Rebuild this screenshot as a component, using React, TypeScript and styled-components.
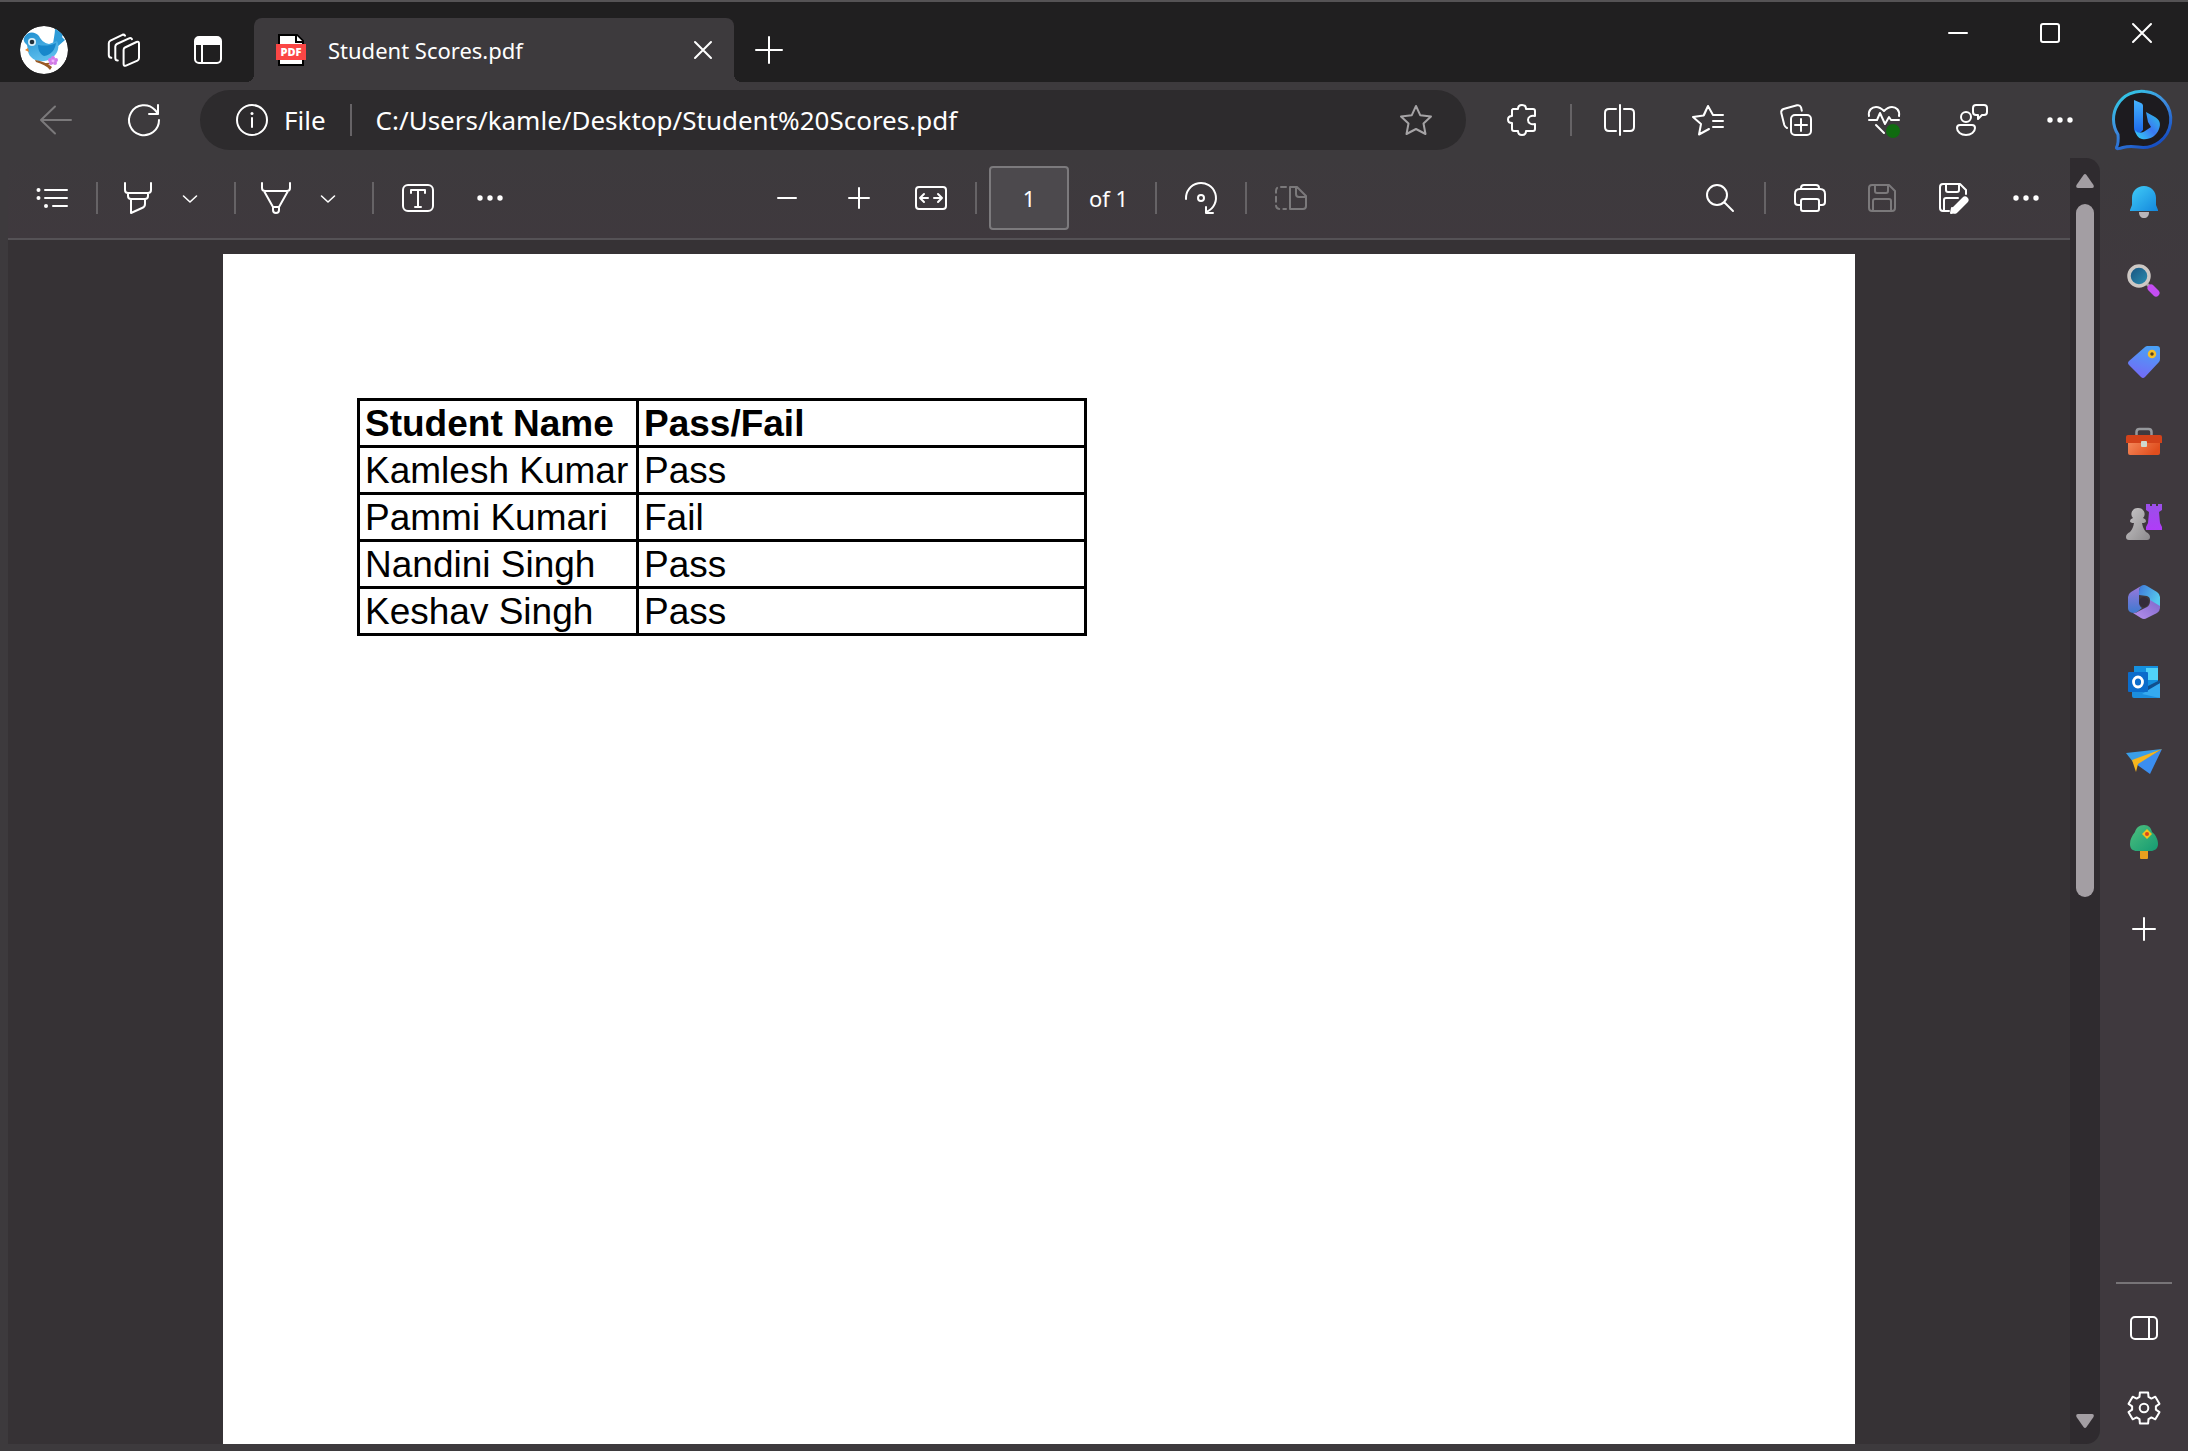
import React from "react";
import styled, { createGlobalStyle, css } from "styled-components";

const color = {
  titleBar: "#201f20",
  chrome: "#3d3a3d",
  toolbar: "#3f393e",
  field: "#2d2b2d",
  canvas: "#363235",
  track: "#2f2b2f",
  thumb: "#a39ea3",
  rule: "#555256",
  divider: "#666366",
  text: "#ffffff",
  muted: "#7b797b",
};

const uiFont = `"Segoe UI", "Noto Sans", "Open Sans", sans-serif`;

const GlobalStyle = createGlobalStyle`
  *, *::before, *::after { box-sizing: border-box; }
  html, body { margin: 0; background: ${color.chrome}; }
  body { font-family: ${uiFont}; color: ${color.text}; overflow: hidden; }
  button, input { font: inherit; color: inherit; margin: 0; padding: 0; border: 0; background: none; }
  button { cursor: pointer; }
  svg { display: block; flex: none; overflow: visible; }
`;

/* ---------- window frame ---------- */

const Window = styled.div`
  display: flex;
  flex-direction: column;
  height: 100vh;
  background: ${color.chrome};
`;

const TitleBar = styled.header`
  display: flex;
  align-items: flex-end;
  height: 82px;
  padding-left: 3px;
  border-top: 2px solid #555355;
  background: ${color.titleBar};
`;

const IconButton = styled.button<{ $w?: number; $h?: number; $dim?: boolean }>`
  display: flex;
  align-items: center;
  justify-content: center;
  flex: none;
  width: ${(p) => p.$w ?? 72}px;
  height: ${(p) => p.$h ?? 64}px;
  color: ${(p) => (p.$dim ? color.muted : color.text)};
`;

const flare = css`
  content: "";
  position: absolute;
  bottom: 0;
  width: 8px;
  height: 8px;
`;

const Tab = styled.div`
  position: relative;
  display: flex;
  align-items: center;
  gap: 22px;
  width: 480px;
  height: 64px;
  margin-left: 1px;
  padding: 0 13px 0 22px;
  border-radius: 8px 8px 0 0;
  background: ${color.chrome};
  &::before {
    ${flare}
    left: -8px;
    background: radial-gradient(circle at 0 0, transparent 8px, ${color.chrome} 8px);
  }
  &::after {
    ${flare}
    right: -8px;
    background: radial-gradient(circle at 100% 0, transparent 8px, ${color.chrome} 8px);
  }
`;

const TabTitle = styled.span`
  flex: 1;
  font-size: 22px;
  line-height: 32px;
  white-space: nowrap;
`;

const WindowControls = styled.div`
  display: flex;
  align-self: flex-start;
  margin-left: auto;
`;

/* ---------- address row ---------- */

const AddressRow = styled.div`
  display: flex;
  align-items: center;
  height: 76px;
  padding: 0 4px 0 12px;
  background: ${color.chrome};
`;

const AddressBar = styled.form`
  display: flex;
  align-items: center;
  flex: 1;
  height: 60px;
  margin: 0 12px;
  padding: 0 6px 0 36px;
  border-radius: 30px;
  background: ${color.field};
`;

const SiteInfo = styled.button`
  display: flex;
  align-items: center;
  gap: 16px;
  height: 48px;
  font-size: 26px;
  line-height: 36px;
`;

const UrlInput = styled.input`
  flex: 1;
  min-width: 0;
  height: 48px;
  font-size: 26px;
  line-height: 36px;
  outline: none;
`;

const Divider = styled.span<{ $gap?: number }>`
  flex: none;
  width: 2px;
  height: 32px;
  margin: 0 ${(p) => p.$gap ?? 8}px;
  background: ${color.divider};
`;

/* ---------- viewer ---------- */

const Body = styled.div`
  display: flex;
  flex: 1;
  min-height: 0;
`;

const Viewer = styled.main`
  display: flex;
  flex-direction: column;
  flex: 1;
  min-width: 0;
  padding: 0 0 7px 8px;
`;

const Toolbar = styled.div`
  display: grid;
  grid-template-columns: 1fr auto 1fr;
  align-items: center;
  height: 82px;
  padding: 0 8px;
  border-bottom: 2px solid ${color.rule};
  background: linear-gradient(${color.chrome}, ${color.toolbar});
`;

const Group = styled.div<{ $end?: boolean }>`
  display: flex;
  align-items: center;
  justify-content: ${(p) => (p.$end ? "flex-end" : "flex-start")};
`;

const SplitButton = styled.div`
  display: flex;
  padding-right: 16px;
`;

const PageInput = styled.input`
  width: 80px;
  height: 64px;
  margin-left: 4px;
  border: 2px solid #7c7a7d;
  border-radius: 4px;
  background: #4c494d;
  font-size: 22px;
  text-align: center;
`;

const PageCount = styled.label`
  min-width: 58px;
  margin-left: 20px;
  font-size: 22px;
  line-height: 32px;
  white-space: nowrap;
`;

const Canvas = styled.section`
  display: flex;
  flex: 1;
  min-height: 0;
  padding: 14px 215px 0;
  background: ${color.canvas};
`;

const Sheet = styled.article`
  flex: 1;
  padding: 144px 134px 0;
  background: #ffffff;
  color: #000000;
  overflow: hidden;
`;

const ScoreTable = styled.table`
  width: 730px;
  table-layout: fixed;
  border-collapse: collapse;
  font-family: Arial, "Liberation Sans", sans-serif;
  font-size: 37px;
  line-height: 42px;
`;

const cell = css`
  height: 47px;
  padding: 2px 5px 0;
  border: 3px solid #000000;
  text-align: left;
  white-space: nowrap;
`;
const HeadCell = styled.th<{ $w?: number }>`
  ${cell}
  width: ${(p) => (p.$w ? `${p.$w}px` : "auto")};
  font-weight: 700;
`;
const Cell = styled.td`
  ${cell}
`;

/* ---------- scrollbar ---------- */

const Scrollbar = styled.div`
  display: flex;
  flex-direction: column;
  align-items: center;
  width: 30px;
  margin-bottom: 7px;
  padding: 16px 0;
  gap: 16px;
  border-radius: 0 14px 14px 0;
  background: ${color.track};
`;
const ScrollTrack = styled.div`
  flex: 1;
  width: 18px;
`;
const ScrollThumb = styled.div`
  height: 58%;
  border-radius: 9px;
  background: ${color.thumb};
`;

/* ---------- sidebar ---------- */

const Sidebar = styled.aside`
  display: flex;
  flex-direction: column;
  align-items: center;
  width: 88px;
  padding: 4px 0 3px;
  background: linear-gradient(${color.chrome}, ${color.toolbar} 120px);
`;
const AddSlot = styled.div`
  margin-top: 7px;
`;
const SidebarRule = styled.hr`
  width: 56px;
  height: 2px;
  margin: auto 0 4px;
  border: 0;
  background: #777477;
`;

/* ---------- line icons ---------- */

type IconProps = { w?: number; h?: number; sw?: number; children: React.ReactNode };
const Line = ({ w = 32, h = 32, sw = 2, children }: IconProps) => (
  <svg
    width={w}
    height={h}
    viewBox={`0 0 ${w} ${h}`}
    fill="none"
    stroke="currentColor"
    strokeWidth={sw}
    strokeLinecap="round"
    strokeLinejoin="round"
    aria-hidden="true"
  >
    {children}
  </svg>
);

const Dots = () => (
  <Line w={28} h={6}>
    <g fill="currentColor" stroke="none">
      <circle cx="4" cy="3" r="2.7" />
      <circle cx="14" cy="3" r="2.7" />
      <circle cx="24" cy="3" r="2.7" />
    </g>
  </Line>
);
const Chevron = () => (
  <Line w={16} h={10}>
    <path d="M1.5 3 8 9l6.5-6" strokeWidth="1.6" />
  </Line>
);
const Workspaces = () => (
  <Line w={34} h={34}>
    <path d="M18 14.5 29.5 9q2.5-1 2.5 1.6V25q0 1.8-1.6 2.6L19 32.6q-2.4.8-2.4-1.6V17q0-1.8 1.4-2.5z" />
    <path d="M25 6.2q-.8-1.6-2.4-1L9.800 11Q8.300 11.800 8.300 13.500V25q0 2.500 2.500 2.500" />
    <path d="M18 2.600q-1-1.400-2.600-.8L3.400 7.600Q1.800 8.400 1.800 10.200V22q0 2.500 2.500 2.800" />
  </Line>
);
const TabMenu = () => (
  <Line w={28} h={28}>
    <rect x="1" y="1" width="26" height="26" rx="4" />
    <path d="M1 9V5a4 4 0 0 1 4-4h18a4 4 0 0 1 4 4v4z" fill="currentColor" stroke="none" />
    <path d="M1 8h26M8 8v19" />
  </Line>
);
const Gear = () => {
  const points: string[] = [];
  for (let k = 0; k < 6; k++) {
    const spots: [number, number][] = [
      [-22, 12],
      [-15, 16],
      [15, 16],
      [22, 12],
    ];
    spots.forEach(([offset, r]) => {
      const a = ((k * 60 - 90 + offset) * Math.PI) / 180;
      points.push(`${(17 + r * Math.cos(a)).toFixed(2)},${(17 + r * Math.sin(a)).toFixed(2)}`);
    });
  }
  return (
    <Line w={34} h={34}>
      <polygon points={points.join(" ")} />
      <circle cx="17" cy="17" r="4.3" />
    </Line>
  );
};

/* ---------- colour drawings ---------- */

const Bird = () => (
  <svg width="48" height="48" viewBox="0 0 48 48" aria-hidden="true">
    <defs>
      <linearGradient id="birdBody" x1="0" y1="0" x2="0.4" y2="1">
        <stop offset="0" stopColor="#1f8fd0" />
        <stop offset="1" stopColor="#5cbdec" />
      </linearGradient>
      <clipPath id="birdClip">
        <circle cx="24" cy="24" r="24" />
      </clipPath>
    </defs>
    <g clipPath="url(#birdClip)">
      <circle cx="24" cy="24" r="24" fill="#fff" />
      <path d="M33 18c1-7 2-11 2-16l4 3 5 1-2 5 3 3-8 7z" fill="#2c9bd8" />
      <path d="M4 12C7 5 15 5 19 10c2 4 5 7 10 8l8-3c3 5 1 13-5 17-7 5-17 4-21-1-4-4-3-9-4-12C5 17 3 15 4 12z" fill="url(#birdBody)" />
      <path d="M18 19c6 1 12 1 18-2-1 7-5 12-12 13-4-2-6-6-6-11z" fill="#1787cb" />
      <circle cx="12" cy="16" r="4" fill="#d9eef8" />
      <circle cx="12" cy="16" r="2.300" fill="#22303a" />
      <path d="m8 22-3 2 4 2z" fill="#e8832c" />
      <path d="M15 34c7 1 12 3 17 7l-2 3c-3-4-8-6-14-8z" fill="#9a5a26" />
      <path d="m25 38 8-1" stroke="#9a5a26" strokeWidth="1.500" />
      <g fill="#d37bea">
        <circle cx="33" cy="32" r="2" />
        <circle cx="36" cy="34" r="2" />
        <circle cx="35" cy="37" r="2" />
        <circle cx="31" cy="37" r="2" />
        <circle cx="30" cy="34" r="2" />
      </g>
      <circle cx="33" cy="35" r="1.300" fill="#f4b6ff" />
    </g>
  </svg>
);

const PdfFile = () => (
  <svg width="30" height="32" viewBox="0 0 30 32" aria-hidden="true">
    <path d="M3 1h18l6 6v24H3z" fill="#fff" stroke="#000" strokeWidth="2" />
    <path d="M20 1v7h7" fill="#fff" stroke="#000" strokeWidth="2" />
    <rect y="10" width="30" height="16" fill="#fb4645" />
    <text x="15" y="22" textAnchor="middle" fontFamily="Open Sans, sans-serif" fontWeight="800" fontSize="11" fill="#fff">
      PDF
    </text>
  </svg>
);

const Bing = () => (
  <svg width="60" height="60" viewBox="0 0 60 60" aria-hidden="true">
    <defs>
      <linearGradient id="bingRing" x1="0" y1="0" x2="0.6" y2="1">
        <stop offset="0" stopColor="#2fd6e6" />
        <stop offset="0.5" stopColor="#3f8fe0" />
        <stop offset="1" stopColor="#1750c4" />
      </linearGradient>
      <linearGradient id="bingStem" x1="0" y1="0" x2="0" y2="1">
        <stop offset="0" stopColor="#45b5ff" />
        <stop offset="1" stopColor="#1a63ea" />
      </linearGradient>
      <linearGradient id="bingBowl" x1="0" y1="1" x2="1" y2="0">
        <stop offset="0" stopColor="#35d7f5" />
        <stop offset="0.5" stopColor="#3a78f2" />
        <stop offset="1" stopColor="#2dc7e6" />
      </linearGradient>
    </defs>
    <path
      d="M31 1.500a28 28 0 1 1-7 55.500c-6-1-10-1-15 .5-3 1-7 2-6.500 0 1.500-3 2-8 1.500-13A28 28 0 0 1 31 1.500z"
      fill="#1d1b1f"
      stroke="url(#bingRing)"
      strokeWidth="3"
      strokeLinejoin="round"
    />
    <path d="M20 10l7 3c2 1 2 2 2 4v23l-5 5c-3-2-4-4-4-8z" fill="url(#bingStem)" />
    <path d="M32 22l9 5c5 3 6 7 4 12-3 8-10 11-17 10-4-1-6-4-7-9 3 4 7 3 10 1l6-4-3-5z" fill="url(#bingBowl)" />
  </svg>
);

const Bell = () => (
  <svg width="28" height="32" viewBox="0 0 28 32" aria-hidden="true">
    <defs>
      <linearGradient id="bell" x1="0" y1="0" x2="1" y2="1">
        <stop offset="0" stopColor="#41cdf8" />
        <stop offset="1" stopColor="#1487dc" />
      </linearGradient>
    </defs>
    <path d="M9 26h10c0 4-2 6-5 6s-5-2-5-6z" fill="#b9b6ba" />
    <path d="M14 0c7 0 12 5 12 12v7l2 5v1H0v-1l2-5v-7C2 5 7 0 14 0z" fill="url(#bell)" />
  </svg>
);

const Magnifier = () => (
  <svg width="34" height="34" viewBox="0 0 34 34" aria-hidden="true">
    <defs>
      <linearGradient id="lens" x1="0" y1="0" x2="1" y2="1">
        <stop offset="0" stopColor="#174f7c" />
        <stop offset="1" stopColor="#2d93b4" />
      </linearGradient>
    </defs>
    <path d="m20 19 4 4" stroke="#a9a4a6" strokeWidth="3" />
    <path d="m24 23 5 5" stroke="#c44df2" strokeWidth="7" strokeLinecap="round" />
    <circle cx="12" cy="11" r="10" fill="url(#lens)" stroke="#cdc8c4" strokeWidth="3.500" />
  </svg>
);

const Tag = () => (
  <svg width="32" height="32" viewBox="0 0 32 32" aria-hidden="true">
    <defs>
      <linearGradient id="tag" x1="0.600" y1="0" x2="0.300" y2="1">
        <stop offset="0" stopColor="#4aa0f6" />
        <stop offset="1" stopColor="#7568f6" />
      </linearGradient>
    </defs>
    <path d="M17 1q1-1 2.500-1H29q3 0 3 3v10q0 2-1 3L17 31q-2 2-4 0L1 19q-2-2 0-4z" fill="url(#tag)" />
    <circle cx="24" cy="8" r="3" fill="#59431c" stroke="#f4bf28" strokeWidth="2.500" />
  </svg>
);

const Toolbox = () => (
  <svg width="36" height="28" viewBox="0 0 36 28" aria-hidden="true">
    <defs>
      <linearGradient id="boxBase" x1="0" y1="0" x2="1" y2="0.400">
        <stop offset="0" stopColor="#f58a5c" />
        <stop offset="1" stopColor="#e04e1e" />
      </linearGradient>
    </defs>
    <path d="M10.500 8V4q0-3 3-3h9q3 0 3 3v4" fill="none" stroke="#96989c" strokeWidth="2.500" />
    <path d="M2 13h32v12q0 2-2 2H4q-2 0-2-2z" fill="url(#boxBase)" />
    <path d="M2 7h32q2 0 2 2v6H0V9q0-2 2-2z" fill="#d3421a" />
    <rect x="15" y="13" width="6" height="6" rx="1" fill="#cfd8cf" />
  </svg>
);

const Chess = () => (
  <svg width="36" height="36" viewBox="0 0 36 36" aria-hidden="true">
    <defs>
      <linearGradient id="rook" x1="0" y1="0" x2="0" y2="1">
        <stop offset="0" stopColor="#9a50e8" />
        <stop offset="1" stopColor="#b03cf8" />
      </linearGradient>
      <linearGradient id="pawn" x1="0" y1="0" x2="1" y2="1">
        <stop offset="0" stopColor="#c9c7c9" />
        <stop offset="1" stopColor="#8d8b8d" />
      </linearGradient>
    </defs>
    <path d="M20 0h4v2h2V0h4v2h2V0h4v6l-3 2 1 11 2 4v3H20v-3l2-4 1-11-3-2z" fill="url(#rook)" />
    <path d="M12 4a6 6 0 0 1 5 10q3 1 3 3t-4 2q1 6 4 9 4 2 4 5 0 3-3 3H3q-3 0-3-3t4-5q3-3 4-9-4 0-4-2t3-3a6 6 0 0 1 5-10z" fill="url(#pawn)" />
  </svg>
);

const Office = () => (
  <svg width="32" height="34" viewBox="0 0 32 34" aria-hidden="true">
    <defs>
      <linearGradient id="m365a" x1="0" y1="0" x2="0" y2="1">
        <stop offset="0" stopColor="#9a78dc" />
        <stop offset="1" stopColor="#3f79cf" />
      </linearGradient>
      <linearGradient id="m365b" x1="0" y1="0" x2="1" y2="0.500">
        <stop offset="0" stopColor="#3f78d8" />
        <stop offset="1" stopColor="#56c8ee" />
      </linearGradient>
      <linearGradient id="m365c" x1="0" y1="1" x2="1" y2="0">
        <stop offset="0" stopColor="#b892ee" />
        <stop offset="1" stopColor="#7a63c8" />
      </linearGradient>
    </defs>
    <path d="M13 1 3 7Q0 9 0 12v11q0 3 3 4.500 3 1 6-.5l5-4q-3-2-3-6V6q0-3 2-5z" fill="url(#m365a)" />
    <path d="M32 15v8q0 3-3 5l-10 5q-3 2-6 0l-8-5q4 0 6-2l8-4q3-2 3-6V12z" fill="url(#m365c)" />
    <path d="M13 1q3-2 6 0l10 6q3 2 3 5v9L22 15q0-3-3-4l-8-1V6q0-3 2-5z" fill="url(#m365b)" />
    <path d="M13 13q3-2 6 0 2 1.500 2 4t-3 4.500q-2 1.500-5-.5-2-1.500-2-4t2-4z" fill="#342c39" />
  </svg>
);

const Outlook = () => (
  <svg width="36" height="32" viewBox="0 0 36 32" aria-hidden="true">
    <rect x="8" y="0" width="24" height="20" fill="#1490df" />
    <rect x="20" y="2" width="12" height="12" fill="#50d2f8" />
    <path d="M34 17v13q0 2-2 2H8q-2 0-2-2v-4l16-3z" fill="#1b8ede" />
    <path d="M34 17 16 28l18 4z" fill="#35aaf0" />
    <path d="m22 24 12-7v-3l-12 6z" fill="#114f8d" />
    <rect x="2" y="6" width="20" height="20" rx="1" fill="#0b6ccb" />
    <ellipse cx="12" cy="16" rx="4.500" ry="5" fill="none" stroke="#fff" strokeWidth="2.800" />
  </svg>
);

const Plane = () => (
  <svg width="36" height="26" viewBox="0 0 36 26" aria-hidden="true">
    <path d="M0 4 36 0 7 13z" fill="#3a9ee8" />
    <path d="M36 0 24 25 10 15z" fill="#3b8ef0" />
    <path d="M6 11 36 0 12 15l-2 8z" fill="#f5b51d" />
  </svg>
);

const Tree = () => (
  <svg width="28" height="34" viewBox="0 0 28 34" aria-hidden="true">
    <defs>
      <linearGradient id="leaf" x1="0" y1="0" x2="1" y2="1">
        <stop offset="0" stopColor="#4fc07e" />
        <stop offset="1" stopColor="#149a72" />
      </linearGradient>
    </defs>
    <rect x="10" y="24" width="8" height="10" rx="1" fill="#e9a01f" />
    <path d="M14 0c5 0 7 3 8 7 4 3 6 8 6 12 0 5-4 7-7 7H7c-4 0-7-2-7-7 0-5 2-8 5-12 1-4 4-7 9-7z" fill="url(#leaf)" />
    <path d="m17 4 5 5-5 5-5-5z" fill="#f3c21c" />
    <circle cx="17" cy="9" r="2" fill="#d8471c" />
  </svg>
);

const Plus = ({ size = 24, sw = 2 }: { size?: number; sw?: number }) => (
  <Line w={size} h={size} sw={sw}>
    <path d={`M${size / 2} 1v${size - 2}M1 ${size / 2}h${size - 2}`} />
  </Line>
);

const scores = [
  ["Kamlesh Kumar", "Pass"],
  ["Pammi Kumari", "Fail"],
  ["Nandini Singh", "Pass"],
  ["Keshav Singh", "Pass"],
];

const sidebarApps: [string, React.ReactNode][] = [
  ["Notifications", <Bell />],
  ["Search", <Magnifier />],
  ["Shopping", <Tag />],
  ["Tools", <Toolbox />],
  ["Games", <Chess />],
  ["Microsoft 365", <Office />],
  ["Outlook", <Outlook />],
  ["Drop", <Plane />],
  ["E-tree", <Tree />],
];

export default function App() {
  return (
    <Window>
      <GlobalStyle />
      <TitleBar>
        <IconButton $w={82} aria-label="Profile">
          <Bird />
        </IconButton>
        <IconButton $w={78} aria-label="Workspaces">
          <Workspaces />
        </IconButton>
        <IconButton $w={90} aria-label="Tab actions menu">
          <TabMenu />
        </IconButton>
        <Tab>
          <PdfFile />
          <TabTitle>Student Scores.pdf</TabTitle>
          <IconButton $w={36} $h={36} aria-label="Close tab">
            <Line w={18} h={18}>
              <path d="m1 1 16 16M17 1 1 17" />
            </Line>
          </IconButton>
        </Tab>
        <IconButton $w={70} aria-label="New tab">
          <Plus size={28} />
        </IconButton>
        <WindowControls>
          <IconButton $w={92} $h={62} aria-label="Minimize">
            <Line w={20} h={20}>
              <path d="M1 10h18" />
            </Line>
          </IconButton>
          <IconButton $w={92} $h={62} aria-label="Maximize">
            <Line w={20} h={20}>
              <rect x="1" y="1" width="18" height="18" rx="2" />
            </Line>
          </IconButton>
          <IconButton $w={92} $h={62} aria-label="Close window">
            <Line w={20} h={20}>
              <path d="m1 1 18 18M19 1 1 19" />
            </Line>
          </IconButton>
        </WindowControls>
      </TitleBar>

      <AddressRow>
        <IconButton $w={88} $dim aria-label="Back">
          <Line>
            <path d="M31 16H1M15 2.500 1 16l14 13.500" />
          </Line>
        </IconButton>
        <IconButton $w={88} aria-label="Refresh">
          <Line>
            <path d="M31 16A15 15 0 1 1 27 6l3 3.500" />
            <path d="M30 1v9h-9" />
          </Line>
        </IconButton>
        <AddressBar onSubmit={(e) => e.preventDefault()}>
          <SiteInfo type="button">
            <Line>
              <circle cx="16" cy="16" r="15" />
              <path d="M16 14v9" />
              <circle cx="16" cy="9.500" r="1.500" fill="currentColor" stroke="none" />
            </Line>
            File
          </SiteInfo>
          <Divider $gap={24} />
          <UrlInput aria-label="Address" defaultValue="C:/Users/kamle/Desktop/Student%20Scores.pdf" />
          <IconButton type="button" $w={88} $h={48} aria-label="Add to favorites">
            <Line>
              <path
                d="m16 2 4.200 9.200L31 12.500l-7.500 7L25.500 30 16 25l-9.500 5 2-10.500L1 12.500l10.800-1.300z"
                stroke="#a5a3a5"
              />
            </Line>
          </IconButton>
        </AddressBar>
        <IconButton $w={88} aria-label="Extensions">
          <Line>
            <path d="M7 5h5c0-2 1-4 4-4s4 2 4 4h7q2 0 2 2v5c-4-1-7 1-7 4s3 5 7 4v5q0 2-2 2h-7c0 2-1 4-4 4s-4-2-4-4H8q-2 0-2-2v-6c-2 0-4-1-4-3.500S4 12 6 12V6z" />
          </Line>
        </IconButton>
        <Divider $gap={4} />
        <IconButton $w={88} aria-label="Split screen">
          <Line>
            <path d="M16 1v30M12 5H5Q1 5 1 9v14q0 4 4 4h7M20 5h6q4 0 4 4v14q0 4-4 4h-6" />
          </Line>
        </IconButton>
        <IconButton $w={88} aria-label="Favorites">
          <Line>
            <path d="M12 11 16 2l5 9M16 2l-4.500 9.500L1 13l8 7-2 10.500L17 25M31 11H21M31 17H21M31 23H21" />
          </Line>
        </IconButton>
        <IconButton $w={88} aria-label="Collections">
          <Line>
            <rect x="11" y="11" width="20" height="20" rx="4" />
            <path d="M21 15v12M15 21h12M7 24Q5 23 4.300 21L1.300 9Q.8 6 3.500 5L17 1.300q3-.6 4 2l.8 3.500" />
          </Line>
        </IconButton>
        <IconButton $w={88} aria-label="Browser essentials">
          <Line>
            <path d="M1 12C0 6 4 3 8 3c4 0 6 2 8 4 2-2 4-4 8-4s8 3 7 9M1 16h8l3-7 5 11 4-7 2 3h8M8 21l8 8" />
            <circle cx="25" cy="27" r="7" fill="#0f6b0f" stroke="none" />
          </Line>
        </IconButton>
        <IconButton $w={88} aria-label="Share">
          <Line>
            <circle cx="10" cy="13" r="5" />
            <path d="M4 21h12q3 0 3 3c0 4-4 7-9 7s-9-3-9-7q0-3 3-3z" />
            <path d="M20 1h8q3 0 3 3v4q0 3-3 3h-2l-4 4v-4h-2q-3 0-3-3V4q0-3 3-3z" />
          </Line>
        </IconButton>
        <IconButton $w={88} aria-label="Settings and more">
          <Dots />
        </IconButton>
        <IconButton $w={80} aria-label="Bing Chat">
          <Bing />
        </IconButton>
      </AddressRow>

      <Body>
        <Viewer>
          <Toolbar>
            <Group>
              <IconButton aria-label="Contents">
                <Line w={32} h={22}>
                  <path d="M9 3h22M9 11h22M17 19h14" />
                  <g fill="currentColor" stroke="none">
                    <circle cx="2.500" cy="3" r="2" />
                    <circle cx="2.500" cy="11" r="2" />
                    <circle cx="10" cy="19" r="2" />
                  </g>
                </Line>
              </IconButton>
              <Divider />
              <SplitButton>
                <IconButton $w={64} aria-label="Highlight">
                  <Line w={28}>
                    <path d="M1 1v7q0 3 3 3h20q3 0 3-3V1M4 11v3q0 3 3 3h14q3 0 3-3v-3M7 17v14l11-5q3-1 3-4v-5" />
                  </Line>
                </IconButton>
                <IconButton $w={40} aria-label="Highlight options">
                  <Chevron />
                </IconButton>
              </SplitButton>
              <Divider />
              <SplitButton>
                <IconButton $w={64} aria-label="Draw">
                  <Line w={30}>
                    <path d="M1 1v5q0 3 3 3h22q3 0 3-3V1M3 9l9 16h6l9-16M12 25v3q0 3 3 3t3-3v-3" />
                  </Line>
                </IconButton>
                <IconButton $w={40} aria-label="Draw options">
                  <Chevron />
                </IconButton>
              </SplitButton>
              <Divider />
              <IconButton aria-label="Add text">
                <Line h={28}>
                  <rect x="1" y="1" width="30" height="26" rx="5" />
                  <path d="M9 9V6h14v3M16 6v17M13 23h6" />
                </Line>
              </IconButton>
              <IconButton aria-label="More tools">
                <Dots />
              </IconButton>
            </Group>

            <Group>
              <IconButton aria-label="Zoom out">
                <Line w={20} h={20}>
                  <path d="M1 10h18" />
                </Line>
              </IconButton>
              <IconButton aria-label="Zoom in">
                <Plus size={22} />
              </IconButton>
              <IconButton aria-label="Fit to width">
                <Line h={24}>
                  <rect x="1" y="1" width="30" height="22" rx="3" />
                  <path d="M13 12H5m4-4-4 4 4 4M19 12h8m-4-4 4 4-4 4" />
                </Line>
              </IconButton>
              <Divider />
              <PageInput id="page-number" defaultValue="1" />
              <PageCount htmlFor="page-number">of 1</PageCount>
              <Divider />
              <IconButton aria-label="Rotate">
                <Line>
                  <path d="M1 17A15 15 0 1 1 22 29.700M21 25v6h7" />
                  <circle cx="16" cy="16" r="3" />
                </Line>
              </IconButton>
              <Divider />
              <IconButton $dim aria-label="Page view">
                <Line h={24}>
                  <path d="M15 1v22M15 1h7l9 9v10q0 3-3 3H15M21 1v7q0 3 3 3h7" />
                  <path d="M11 1H5Q1 1 1 5v14q0 4 4 4h6" strokeDasharray="5 4" />
                </Line>
              </IconButton>
            </Group>

            <Group $end>
              <IconButton aria-label="Find">
                <Line w={28} h={28}>
                  <circle cx="11" cy="11" r="10" />
                  <path d="m18.500 18.500 8.500 8.500" />
                </Line>
              </IconButton>
              <Divider />
              <IconButton aria-label="Print">
                <Line h={28}>
                  <path d="M7 21H4q-3 0-3-3v-8q0-5 5-5h20q5 0 5 5v8q0 3-3 3h-3M7 5V4q0-3 3-3h12q3 0 3 3v1" />
                  <rect x="7" y="15" width="18" height="12" rx="2" />
                </Line>
              </IconButton>
              <IconButton $dim aria-label="Save">
                <Line w={28} h={28}>
                  <path d="M4 1h17l6 6v17q0 3-3 3H4q-3 0-3-3V4q0-3 3-3zM7 1v6q0 2 2 2h9q2 0 2-2V1M5 27V17q0-2 2-2h14q2 0 2 2v10" />
                </Line>
              </IconButton>
              <IconButton aria-label="Save as">
                <Line w={30} h={30}>
                  <path d="M10 28H4q-3 0-3-3V4q0-3 3-3h17l6 6v4M7 1v6q0 2 2 2h9q2 0 2-2V1M5 28V17q0-2 2-2h12" />
                  <path d="m16 27 10-10" strokeWidth="7" />
                  <path d="m12 30 1-5 4 4z" fill="currentColor" />
                </Line>
              </IconButton>
              <IconButton aria-label="More options">
                <Dots />
              </IconButton>
            </Group>
          </Toolbar>

          <Canvas>
            <Sheet>
              <ScoreTable>
                <thead>
                  <tr>
                    <HeadCell $w={279}>Student Name</HeadCell>
                    <HeadCell>Pass/Fail</HeadCell>
                  </tr>
                </thead>
                <tbody>
                  {scores.map(([name, result]) => (
                    <tr key={name}>
                      <Cell>{name}</Cell>
                      <Cell>{result}</Cell>
                    </tr>
                  ))}
                </tbody>
              </ScoreTable>
            </Sheet>
          </Canvas>
        </Viewer>

        <Scrollbar>
          <IconButton $w={18} $h={14} aria-label="Scroll up">
            <svg width="18" height="14" viewBox="0 0 18 14">
              <path d="M7.500 1q1.500-2 3 0L17.500 11q1 3-1.500 3H2q-2.500 0-1.500-3z" fill={color.thumb} />
            </svg>
          </IconButton>
          <ScrollTrack>
            <ScrollThumb />
          </ScrollTrack>
          <IconButton $w={18} $h={14} aria-label="Scroll down">
            <svg width="18" height="14" viewBox="0 0 18 14">
              <path d="M7.500 13q1.500 2 3 0L17.500 3q1-3-1.500-3H2Q-.5 0 .5 3z" fill={color.thumb} />
            </svg>
          </IconButton>
        </Scrollbar>

        <Sidebar>
          {sidebarApps.map(([name, icon]) => (
            <IconButton key={name} $w={80} $h={80} aria-label={name}>
              {icon}
            </IconButton>
          ))}
          <AddSlot>
            <IconButton $w={80} $h={80} aria-label="Customize sidebar">
              <Plus size={24} />
            </IconButton>
          </AddSlot>
          <SidebarRule />
          <IconButton $w={80} $h={80} aria-label="Hide sidebar">
            <Line w={28} h={24}>
              <rect x="1" y="1" width="26" height="22" rx="4" />
              <path d="M19 1v22" />
            </Line>
          </IconButton>
          <IconButton $w={80} $h={80} aria-label="Sidebar settings">
            <Gear />
          </IconButton>
        </Sidebar>
      </Body>
    </Window>
  );
}
